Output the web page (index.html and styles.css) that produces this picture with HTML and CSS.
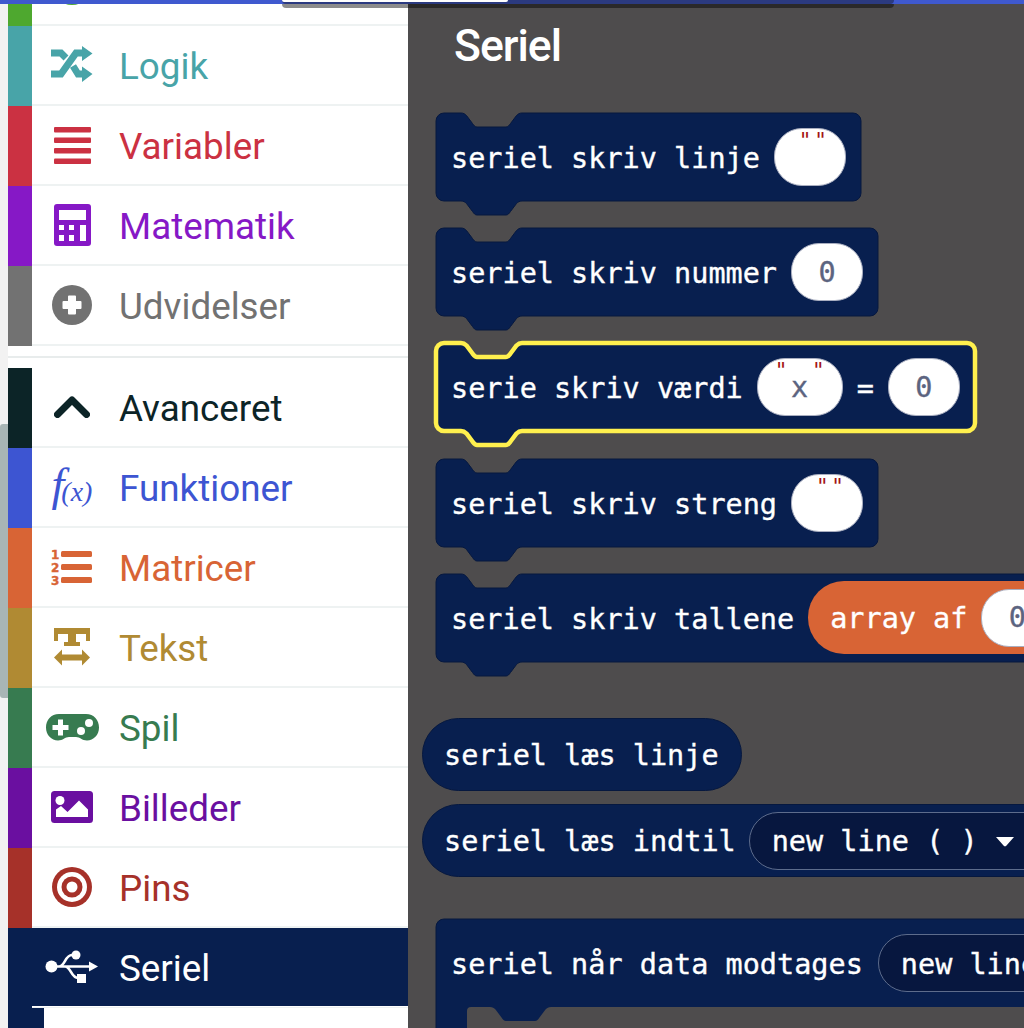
FILE: index.html
```html
<!DOCTYPE html>
<html lang="da">
<head>
<meta charset="utf-8">
<title>Seriel</title>
<link rel="stylesheet" href="styles.css">
</head>
<body>
<div class="app">
  <div class="topbar"></div>
  <div class="toolbar"><div class="toolbar-pill"></div></div>
  <div class="gutter"><div class="scrollthumb"></div></div>
  <nav class="sidebar">
    <div class="row row-clip c-loops">
      <span class="bar"></span>
      <span class="cell"><span class="ico"><svg width="40" height="6" viewBox="0 0 40 6"><circle cx="20" cy="-15" r="20"/></svg></span></span>
    </div>
    <div class="row c-logic"><span class="bar"></span><span class="cell"><span class="ico"><svg width="42" height="38" viewBox="0 0 42 38"><path class="st" d="M0 7H10L15 12M22 20L27 28H34M0 28H10L25 7H34"/><path d="M31 0L41.500 7.500L31 15ZM31 20.500L41.500 28L31 36Z"/></svg></span><span class="label">Logik</span></span></div>
    <div class="row c-var"><span class="bar"></span><span class="cell"><span class="ico"><svg width="37" height="37" viewBox="0 0 37 37"><rect width="37" height="5.500" rx="1"/><rect y="10.500" width="37" height="5.500" rx="1"/><rect y="21" width="37" height="5.500" rx="1"/><rect y="31.500" width="37" height="5.500" rx="1"/></svg></span><span class="label">Variabler</span></span></div>
    <div class="row c-math"><span class="bar"></span><span class="cell"><span class="ico"><svg width="37" height="42" viewBox="0 0 37 42"><rect width="37" height="42" rx="3"/><path class="w" d="M5 6H32V16H5ZM5 21H10V26H5ZM15 21H20V26H15ZM26 21H32V37H26ZM5 31H10V37H5ZM15 31H20V37H15Z"/></svg></span><span class="label">Matematik</span></span></div>
    <div class="row c-ext"><span class="bar"></span><span class="cell"><span class="ico"><svg width="40" height="40" viewBox="0 0 40 40"><circle cx="20" cy="20" r="20"/><path class="w" d="M16 11.500a1 1 0 0 1 1-1h6a1 1 0 0 1 1 1V16h4.500a1 1 0 0 1 1 1v6a1 1 0 0 1-1 1H24v4.500a1 1 0 0 1-1 1h-6a1 1 0 0 1-1-1V24h-4.500a1 1 0 0 1-1-1v-6a1 1 0 0 1 1-1H16Z"/></svg></span><span class="label">Udvidelser</span></span></div>
    <div class="divider"></div>
    <div class="row c-adv"><span class="bar"></span><span class="cell"><span class="ico"><svg width="36" height="22" viewBox="0 0 36 22"><path class="st chev" d="M3.500 18.500L18 4L32.500 18.500"/></svg></span><span class="label">Avanceret</span></span></div>
    <div class="row c-fn"><span class="bar"></span><span class="cell"><span class="ico fx"><span class="fx-f">f</span><span class="fx-x">(x)</span></span><span class="label">Funktioner</span></span></div>
    <div class="row c-arr"><span class="bar"></span><span class="cell"><span class="ico"><svg width="42" height="38" viewBox="0 0 42 38"><text class="num" x="0" y="11">1</text><text class="num" x="0" y="24">2</text><text class="num" x="0" y="37">3</text><rect x="10" y="3" width="31" height="6" rx="1.500"/><rect x="10" y="16" width="31" height="6" rx="1.500"/><rect x="10" y="29" width="31" height="6" rx="1.500"/></svg></span><span class="label">Matricer</span></span></div>
    <div class="row c-txt"><span class="bar"></span><span class="cell"><span class="ico"><svg width="36" height="38" viewBox="0 0 36 38"><path d="M0 0H36V13H32V6H22V14H26V18H10V14H14V6H4V13H0ZM0 29.500L8 21.500V26.500H28V21.500L36 29.500L28 37.500V32.500H8V37.500Z"/></svg></span><span class="label">Tekst</span></span></div>
    <div class="row c-game"><span class="bar"></span><span class="cell"><span class="ico"><svg width="53" height="27" viewBox="0 0 53 27"><path d="M13 0H40C48 0 53 6 53 13.500C53 21 47.500 26.500 41 26.500C36 26.500 34 23 30 23H23C19 23 17 26.500 12 26.500C5.500 26.500 0 21 0 13.500C0 6 5 0 13 0Z"/><path class="w" d="M12 5.500H17V11H22.500V16H17V21.500H12V16H6.500V11H12Z"/><circle class="w" cx="43" cy="9" r="4"/><circle class="w" cx="35" cy="17" r="4"/></svg></span><span class="label">Spil</span></span></div>
    <div class="row c-img"><span class="bar"></span><span class="cell"><span class="ico"><svg width="42" height="32" viewBox="0 0 42 32"><rect width="42" height="32" rx="3.500"/><circle class="w" cx="9" cy="9.500" r="4.500"/><path class="w" d="M5 26V18.500L10 15L16.500 21L28 9.500L37 18.500V26Z"/></svg></span><span class="label">Billeder</span></span></div>
    <div class="row c-pins"><span class="bar"></span><span class="cell"><span class="ico"><svg width="40" height="40" viewBox="0 0 40 40"><circle cx="20" cy="20" r="20"/><circle class="w" cx="20" cy="20" r="15"/><circle cx="20" cy="20" r="10.500"/><circle class="w" cx="20" cy="20" r="5.500"/></svg></span><span class="label">Pins</span></span></div>
    <div class="row row-active"><span class="bar"></span><span class="cell"><span class="ico"><svg width="54" height="34" viewBox="0 0 54 34"><circle class="w" cx="6.500" cy="16.500" r="6"/><circle class="w" cx="31" cy="5" r="4.500"/><rect class="w" x="32" y="24" width="9" height="9"/><path class="usb" d="M6 16.500H46M14 16.500C20 16.500 20 5 27 5M20 16.500C26 16.500 26 28 33 28"/><path class="w" d="M44 11.500L53 16.500L44 21.500Z"/></svg></span><span class="label">Seriel</span></span></div>
    <div class="tail"><span class="tail-line"></span><span class="tail-block"></span></div>
  </nav>
  <main class="flyout">
    <h1 class="title">Seriel</h1>
    <div class="block">
      <svg class="shape" width="425" height="102" viewBox="0 0 425 102"><path d="M0 8a8 8 0 0 1 8-8h17c2.500 0 4 1 5.500 2.500l6 8c1.500 2 2.500 3.500 4.500 3.500h29c2 0 3-1.500 4.500-3.500l6-8c1.500-1.500 3-2.500 5.500-2.500H417a8 8 0 0 1 8 8V80a8 8 0 0 1-8 8H86c-2.500 0-4 1-5.500 2.500l-6 8c-1.500 2-2.500 3.500-4.500 3.500H41c-2 0-3-1.500-4.500-3.500l-6-8C29 89 27.500 88 25 88H8a8 8 0 0 1-8-8Z"/></svg>
      <span class="txt">seriel skriv linje</span>
      <span class="field"><span class="q q-l">"</span><span class="q q-r">"</span></span>
    </div>
    <div class="block">
      <svg class="shape" width="442" height="102" viewBox="0 0 442 102"><path d="M0 8a8 8 0 0 1 8-8h17c2.500 0 4 1 5.500 2.500l6 8c1.500 2 2.500 3.500 4.500 3.500h29c2 0 3-1.500 4.500-3.500l6-8c1.500-1.500 3-2.500 5.500-2.500H434a8 8 0 0 1 8 8V80a8 8 0 0 1-8 8H86c-2.500 0-4 1-5.500 2.500l-6 8c-1.500 2-2.500 3.500-4.500 3.500H41c-2 0-3-1.500-4.500-3.500l-6-8C29 89 27.500 88 25 88H8a8 8 0 0 1-8-8Z"/></svg>
      <span class="txt">seriel skriv nummer</span>
      <span class="field"><span class="val">0</span></span>
    </div>
    <div class="block block-sel">
      <svg class="shape shape-sel" width="539" height="102" viewBox="0 0 539 102"><path d="M0 8a8 8 0 0 1 8-8h17c2.500 0 4 1 5.500 2.500l6 8c1.500 2 2.500 3.500 4.500 3.500h29c2 0 3-1.500 4.500-3.500l6-8c1.500-1.500 3-2.500 5.500-2.500H531a8 8 0 0 1 8 8V80a8 8 0 0 1-8 8H86c-2.500 0-4 1-5.500 2.500l-6 8c-1.500 2-2.500 3.500-4.500 3.500H41c-2 0-3-1.500-4.500-3.500l-6-8C29 89 27.500 88 25 88H8a8 8 0 0 1-8-8Z"/></svg>
      <span class="txt">serie skriv værdi</span>
      <span class="field field-wide"><span class="q q-l">"</span><span class="val">x</span><span class="q q-r">"</span></span>
      <span class="txt eq">=</span>
      <span class="field"><span class="val">0</span></span>
    </div>
    <div class="block">
      <svg class="shape" width="442" height="102" viewBox="0 0 442 102"><path d="M0 8a8 8 0 0 1 8-8h17c2.500 0 4 1 5.500 2.500l6 8c1.500 2 2.500 3.500 4.500 3.500h29c2 0 3-1.500 4.500-3.500l6-8c1.500-1.500 3-2.500 5.500-2.500H434a8 8 0 0 1 8 8V80a8 8 0 0 1-8 8H86c-2.500 0-4 1-5.500 2.500l-6 8c-1.500 2-2.500 3.500-4.500 3.500H41c-2 0-3-1.500-4.500-3.500l-6-8C29 89 27.500 88 25 88H8a8 8 0 0 1-8-8Z"/></svg>
      <span class="txt">seriel skriv streng</span>
      <span class="field"><span class="q q-l">"</span><span class="q q-r">"</span></span>
    </div>
    <div class="block block-last">
      <svg class="shape" width="800" height="102" viewBox="0 0 800 102"><path d="M0 8a8 8 0 0 1 8-8h17c2.500 0 4 1 5.500 2.500l6 8c1.500 2 2.500 3.500 4.500 3.500h29c2 0 3-1.500 4.500-3.500l6-8c1.500-1.500 3-2.500 5.500-2.500H792a8 8 0 0 1 8 8V80a8 8 0 0 1-8 8H86c-2.500 0-4 1-5.500 2.500l-6 8c-1.500 2-2.500 3.500-4.500 3.500H41c-2 0-3-1.500-4.500-3.500l-6-8C29 89 27.500 88 25 88H8a8 8 0 0 1-8-8Z"/></svg>
      <span class="txt">seriel skriv tallene</span>
      <span class="array"><span class="txt">array af</span><span class="field"><span class="val">0</span></span></span>
    </div>
    <div class="pill pill-first"><span class="txt">seriel læs linje</span></div>
    <div class="pill pill-long">
      <span class="txt">seriel læs indtil</span>
      <span class="drop"><span class="txt">new line ( )</span><svg class="tri" width="20" height="11" viewBox="0 0 20 11"><path d="M1 1H19L11.500 9.500a2 2 0 0 1-3 0Z"/></svg></span>
    </div>
    <div class="block block-event">
      <svg class="shape" width="800" height="200" viewBox="0 0 800 200"><path d="M0 8a8 8 0 0 1 8-8H800V200H0Z"/><path class="hole" d="M31 200V92a4 4 0 0 1 4-4H54c2.500 0 4 1 5.500 2.500l6 8c1.500 2 2.500 3.500 4.500 3.500h29c2 0 3-1.500 4.500-3.500l6-8c1.500-1.500 3-2.500 5.500-2.500H800V200Z"/></svg>
      <span class="txt">seriel når data modtages</span>
      <span class="drop"><span class="txt">new line ( )</span></span>
    </div>
  </main>
</div>
</body>
</html>
```
FILE: styles.css
```css
* { box-sizing: border-box; }
html, body { margin: 0; padding: 0; }
body { width: 1024px; height: 1028px; overflow: hidden; background: #fff; }

.app { position: relative; display: flex; width: 1024px; height: 1028px; overflow: hidden; font-family: Roboto, "Liberation Sans", sans-serif; }

.topbar { position: absolute; z-index: 5; left: 0; top: 0; width: 100%; height: 4px; background: #3f59cf; }
.toolbar { position: absolute; z-index: 6; left: 282px; top: 0; width: 612px; height: 4px; background: #2b3a80; border-radius: 0 0 22px 22px; box-shadow: 0 4px 0 rgba(0, 0, 0, .45); }
.toolbar-pill { width: 226px; height: 2px; margin-left: 0; background: #fff; border-radius: 0 0 10px 10px; }

.gutter { position: relative; flex: 0 0 8px; background: #f2f2f2; }
.scrollthumb { position: absolute; left: 0; top: 424px; width: 8px; height: 274px; background: #a8b5b5; border-radius: 3px 0 0 3px; }

.sidebar { display: flex; flex-direction: column; flex: 0 0 400px; background: #fff; }
.row { display: flex; height: 80px; flex: none; }
.row-clip { height: 26px; }
.bar { flex: 0 0 24px; background: currentColor; }
.cell { display: flex; flex: 1; align-items: center; border-bottom: 2px solid #eef2f2; padding-bottom: 0; }
.ico { display: flex; flex: 0 0 80px; align-items: center; justify-content: center; }
.ico svg { display: block; fill: currentColor; }
.label { margin-left: 7px; font-size: 36.800px; line-height: 1; margin-top: 5px; }
.st { fill: none !important; stroke: currentColor; stroke-width: 7; }
.chev { stroke-linecap: round; stroke-linejoin: round; stroke-width: 7; }
.w { fill: #fff; }
.usb { fill: none; stroke: #fff; stroke-width: 2.600; }
.num { font-family: "DejaVu Sans", sans-serif; font-size: 12px; font-weight: 700; fill: currentColor; stroke: currentColor; stroke-width: .4; }

.row-clip .cell { align-items: flex-start; }
.row-clip .ico { height: 6px; }

.divider { height: 22px; flex: none; position: relative; background: linear-gradient(#fff 10px, #e8ecec 10px, #e8ecec 12px, #fff 12px); }

.c-loops { color: #4ea82f; }
.c-logic { color: #48a4a8; }
.c-var { color: #cb3142; }
.c-math { color: #8618c6; }
.c-ext { color: #727272; }
.c-adv { color: #0c2427; }
.c-fn { color: #3d55d2; }
.c-arr { color: #d86435; }
.c-txt { color: #b08a33; }
.c-game { color: #377b50; }
.c-img { color: #6a0fa0; }
.c-pins { color: #a63129; }

.row-active { height: 78px; background: #081f4f; color: #fff; }
.row-active .bar { background: #081f4f; }
.row-active .cell { border-bottom: 0; }

.fx { font-family: "Liberation Serif", serif; font-style: italic; line-height: 1; }
.fx-f { font-size: 46px; margin-right: -3px; margin-top: -4px; }
.fx-x { font-size: 28px; margin-top: 10px; }

.tail { position: relative; flex: 1; }
.tail-line { display: block; height: 2px; margin-left: 24px; background: linear-gradient(#fff 1px, #eef2f2 1px); }
.tail-block { display: block; width: 36px; height: 20px; background: #081f4f; }
.tail::before { content: ""; position: absolute; left: 0; top: 0; width: 24px; height: 2px; background: #081f4f; }

.flyout { position: relative; flex: 1; min-width: 0; height: 1028px; overflow: hidden; background: #4e4c4d; padding: 0 0 0 28px; }
.title { margin: 0 0 0 18px; padding-top: 22px; height: 113px; color: #fff; font-size: 44.500px; font-weight: 500; line-height: 48px; letter-spacing: -1px; }

.block { position: relative; display: flex; align-items: center; height: 88px; width: fit-content; padding: 0 15px; margin-bottom: 27px; white-space: nowrap; }
.block-sel { margin-bottom: 28px; }
.block-last { margin-bottom: 56px; }
.block-event { margin-top: 42px; height: 88px; }
.shape { position: absolute; left: 0; top: 0; fill: #081f4f; stroke: #06183f; stroke-width: 1; overflow: visible; }
.shape .hole { fill: #4e4c4d; stroke: none; }
.shape-sel { stroke: #fff04e; stroke-width: 4.500; }
.txt { position: relative; padding-top: 4px; color: #fff; font-family: "DejaVu Sans Mono", monospace; font-size: 28.500px; line-height: 1; -webkit-text-stroke: .35px #fff; }

.field { position: relative; display: flex; flex: none; align-items: center; justify-content: center; width: 72px; height: 58px; margin-left: 14px; background: #fff; border: 1px solid #a9aec0; border-radius: 28px; }
.field-wide { width: 86px; margin-left: 14px; }
.val { padding-top: 2px; color: #5c6480; font-family: "DejaVu Sans Mono", monospace; font-size: 28.500px; line-height: 1; -webkit-text-stroke: .35px #5c6480; }
.q { position: absolute; top: 1px; color: #a31515; font-family: "DejaVu Sans Mono", monospace; font-size: 21px; line-height: 1.100; }
.q-l { left: 24px; }
.q-r { right: 18px; }
.field-wide .q-l { left: 17px; }
.field-wide .q-r { right: 17px; }
.eq { margin-left: 14px; margin-right: 0; }

.array { position: relative; display: flex; flex: none; align-items: center; height: 73px; margin-left: 14px; margin-top: -1px; padding: 0 30px 0 22px; background: #d86435; border-radius: 36px; }
.array .field { margin-left: 14px; }

.pill { position: relative; display: flex; align-items: center; width: fit-content; height: 73px; margin-left: -14px; padding: 0 22px 0 21px; background: #081f4f; border: 1px solid #06183f; border-radius: 37px; white-space: nowrap; }
.pill-first { margin-bottom: 13px; }
.pill-long { padding-right: 60px; }

.drop { position: relative; display: flex; flex: none; align-items: center; height: 58px; margin-left: 13px; padding: 0 50px 0 22px; background: #07173f; border: 1px solid #5d6c8c; border-radius: 29px; }
.tri { flex: none; margin-left: 17px; margin-top: 1px; fill: #fff; }
.block-event .drop { margin-left: 15px; }
```
